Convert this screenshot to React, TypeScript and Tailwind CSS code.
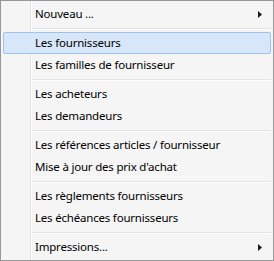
import React from 'react';

type Entry = { label: string; submenu?: boolean; active?: boolean } | 'sep';

const entries: Entry[] = [
    { label: 'Nouveau ...', submenu: true },
    'sep',
    { label: 'Les fournisseurs', active: true },
    { label: 'Les familles de fournisseur' },
    'sep',
    { label: 'Les acheteurs' },
    { label: 'Les demandeurs' },
    'sep',
    { label: 'Les références articles / fournisseur' },
    { label: "Mise à jour des prix d'achat" },
    'sep',
    { label: 'Les règlements fournisseurs' },
    { label: 'Les échéances fournisseurs' },
    'sep',
    { label: 'Impressions...', submenu: true },
];

function Arrow() {
    return (
        <svg width="4" height="7" viewBox="0 0 4 7" className="block">
            <path d="M0 0 L4 3.5 L0 7 Z" fill="#1a1a1a" />
        </svg>
    );
}

export default function App() {
    return (
        <div
            className="w-[274px] h-[261px] border border-[#979797] bg-[#f5f5f5] p-[2px] bg-[linear-gradient(to_right,transparent_29px,#e2e3e3_29px,#e2e3e3_30px,#ffffff_30px,#ffffff_31px,transparent_31px)] text-[11.5px] tracking-[-0.2px] text-black"
            style={{ fontFamily: '"Segoe UI", "Noto Sans", "Liberation Sans", sans-serif' }}
        >
            <div className="flex flex-col">
                {entries.map((e, i) =>
                    e === 'sep' ? (
                        <div key={i} className="h-[7px] flex flex-col justify-center pl-[29px]">
                            <div className="h-px bg-[#e2e3e3]" />
                            <div className="h-px bg-white" />
                        </div>
                    ) : (
                        <div
                            key={i}
                            className={
                                e.active
                                    ? 'h-[22px] flex items-center justify-between pl-[31px] pr-[8px] border border-[#9ec2ec] bg-[#d7e7f9] rounded-[2px]'
                                    : 'h-[22px] flex items-center justify-between pl-[32px] pr-[9px]'
                            }
                        >
                            <span className="leading-none whitespace-nowrap">{e.label}</span>
                            {e.submenu && <Arrow />}
                        </div>
                    )
                )}
            </div>
        </div>
    );
}
